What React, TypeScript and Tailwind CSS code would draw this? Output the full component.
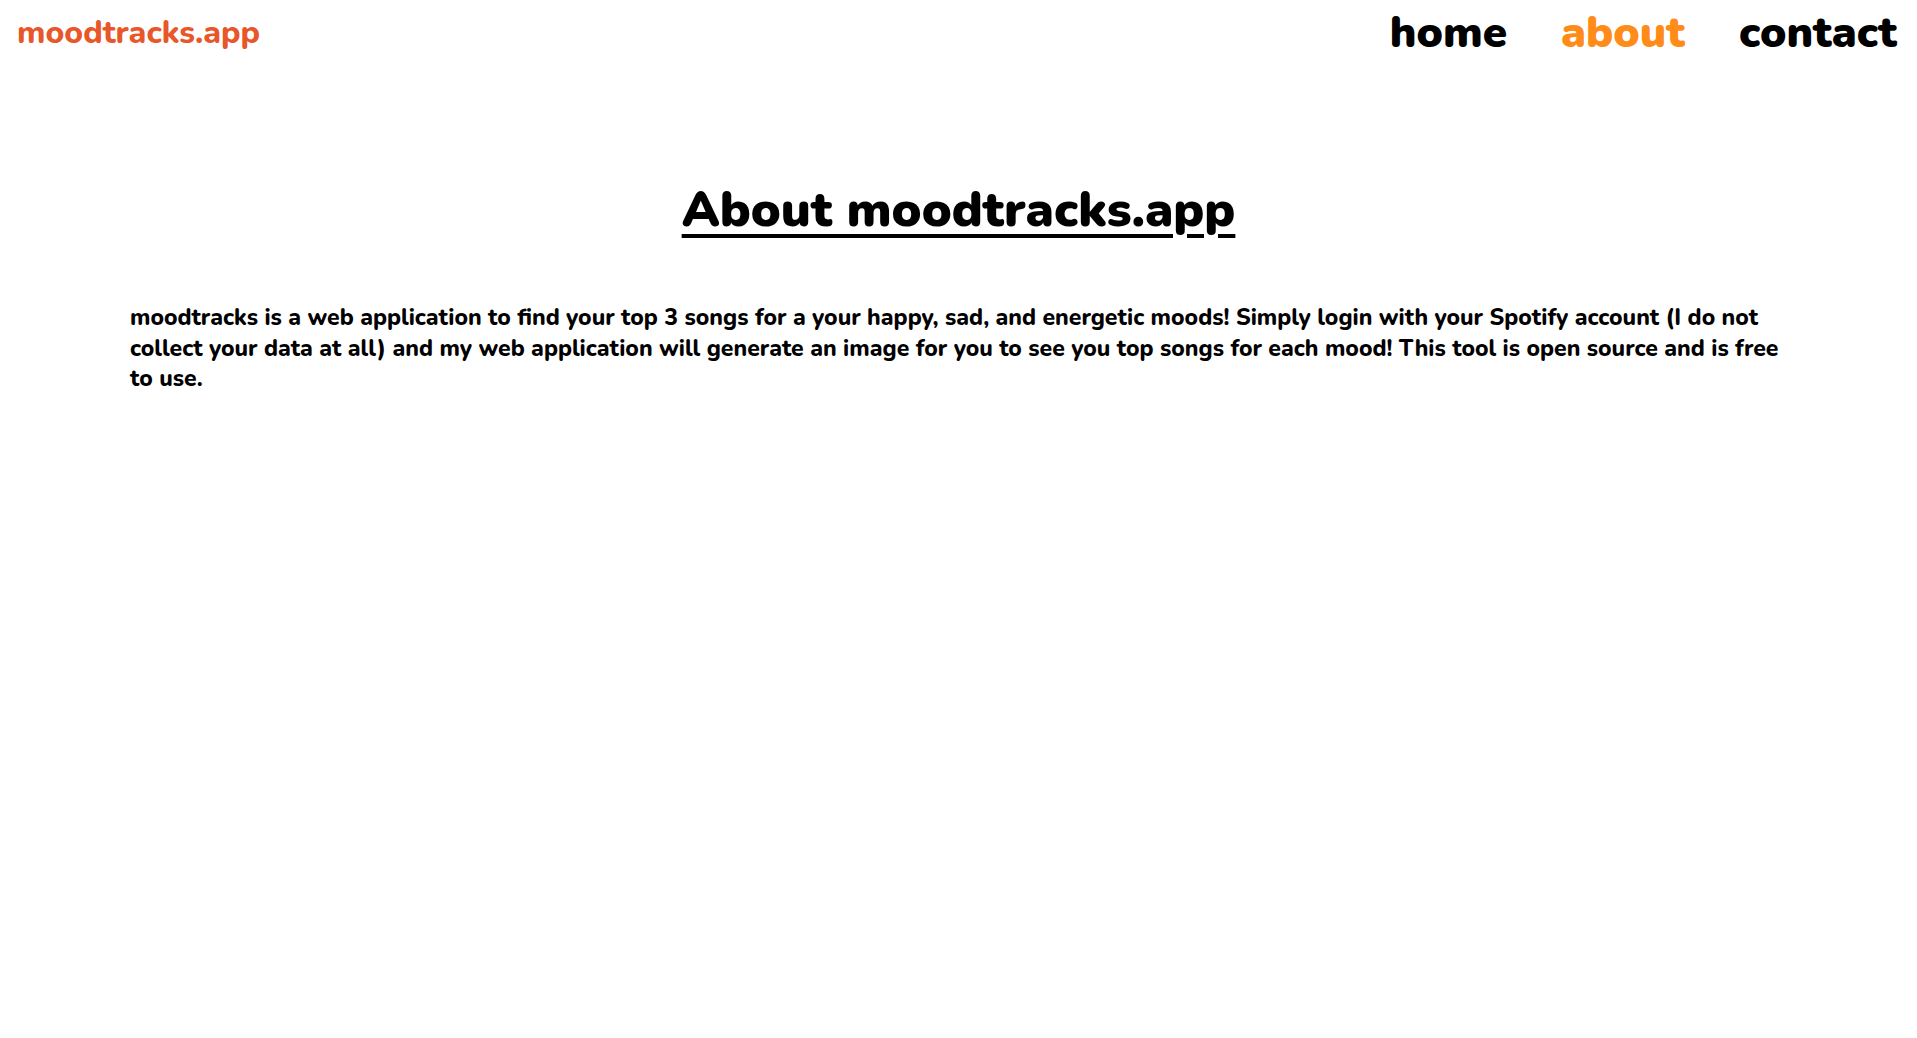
import React from 'react';

const NAV = [
  { label: 'home', active: false },
  { label: 'about', active: true },
  { label: 'contact', active: false },
];

export default function App() {
  return (
    <div className="min-h-screen bg-white text-black font-['Nunito','Open_Sans',sans-serif]">
      {/* Header */}
      <header className="flex items-center justify-between h-[66px] pl-[17px] pr-[20px]">
        <a className="text-[32px] font-extrabold text-[#e8572a]">moodtracks.app</a>
        <nav className="flex items-center gap-[54px]">
          {NAV.map((n) => (
            <a
              key={n.label}
              className={`text-[44px] font-black leading-none ${n.active ? 'text-[#ff8c19]' : 'text-black'}`}
            >
              {n.label}
            </a>
          ))}
        </nav>
      </header>

      {/* Content */}
      <main className="px-[130px]">
        <h1 className="mt-[119px] text-center text-[50px] font-black leading-none underline underline-offset-[8px] decoration-[4px]">
          About moodtracks.app
        </h1>
        <p className="mt-[68px] text-[23px] font-extrabold leading-[30.6px]">
          moodtracks is a web application to find your top 3 songs for a your happy, sad, and energetic moods! Simply login with your Spotify account (I do not collect your data at all) and my web application will generate an image for you to see you top songs for each mood! This tool is open source and is free to use.
        </p>
      </main>
    </div>
  );
}
